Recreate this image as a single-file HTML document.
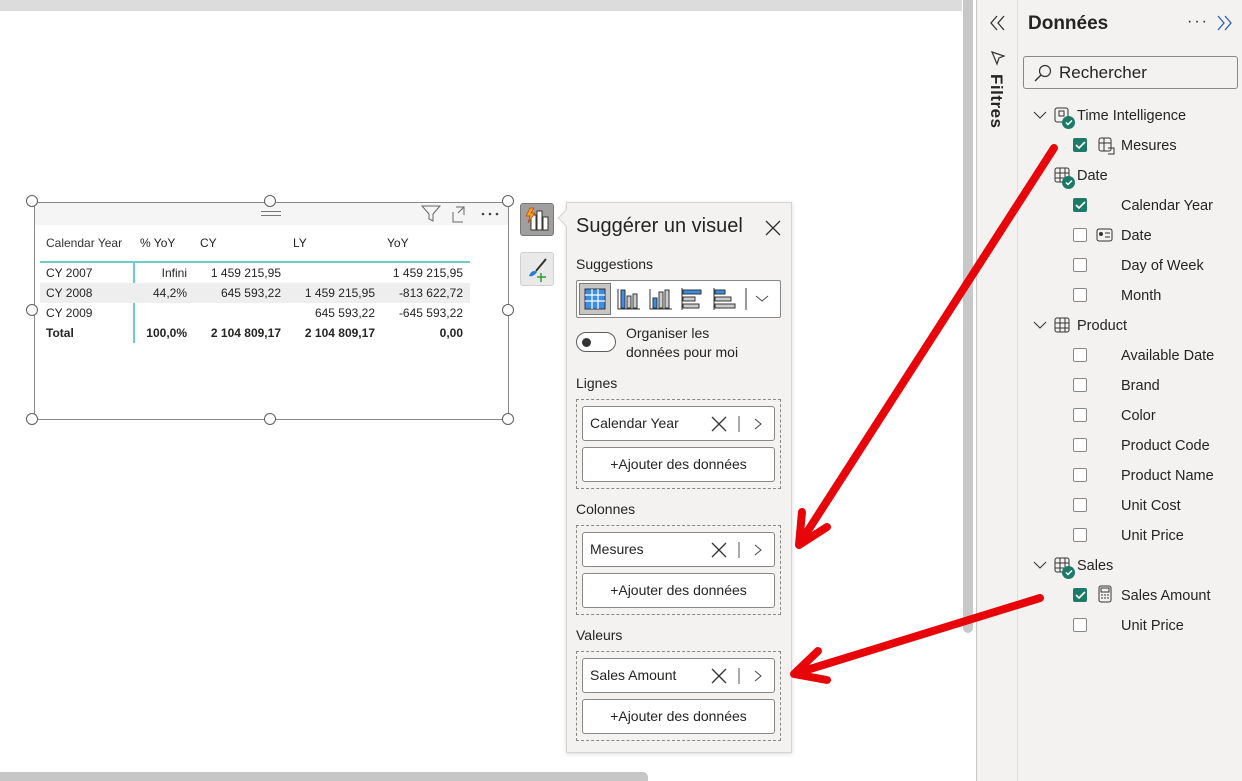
<!DOCTYPE html>
<html><head><meta charset="utf-8"><style>
*{margin:0;padding:0;box-sizing:border-box}
body{width:1242px;height:781px;position:relative;overflow:hidden;background:#fff;font-family:"Segoe UI","Liberation Sans",sans-serif;color:#252423}
.a{position:absolute}
.t{font-size:12px;color:#252423;white-space:nowrap}
.r{text-align:right}
.h{width:12px;height:12px;border:1px solid #605e5c;border-radius:50%;background:#fff;position:absolute}
.lbl{font-size:14px;position:absolute;left:576px}
.well{position:absolute;left:576px;width:205px;height:90px;border:1px dashed #8a8886}
.pill{position:absolute;left:5px;width:193px;height:35px;border:1px solid #8a8886;border-radius:3px;background:#fff;font-size:14px}
.cb{position:absolute;width:14px;height:14px;border:1px solid #8a8886;border-radius:2px;background:#fff}
.cb.on{background:#1e7a68;border-color:#1e7a68}
.rt{position:absolute;font-size:14.5px;color:#252423;white-space:nowrap}
</style></head><body>
<div class="a" style="left:0;top:0;width:962px;height:11px;background:#dcdcdc"></div>
<div class="a" style="left:963px;top:0;width:10px;height:633px;background:#c8c8c8;border-radius:0 0 5px 5px"></div>
<div class="a" style="left:976px;top:0;width:1px;height:781px;background:#c8c6c4"></div>
<div class="a" style="left:0;top:772px;width:648px;height:9px;background:#c6c6c6;border-radius:0 5px 0 0"></div>

<div class="a" style="left:34px;top:202px;width:475px;height:218px;border:1px solid #8a8886"></div>
<div class="a" style="left:35px;top:203px;width:473px;height:22px;background:#f5f5f5"></div>
<div class="a" style="left:261px;top:211px;width:20px;height:1px;background:#777"></div>
<div class="a" style="left:261px;top:215px;width:20px;height:1px;background:#777"></div>
<svg class="a" style="left:420px;top:204px" width="85" height="20"><path d="M2 2h18l-7 8v7l-4-2v-5z" fill="none" stroke="#666"/><path d="M33 8v10h10M36 3h8v8M44 3l-6 6" fill="none" stroke="#666"/><circle cx="63" cy="10" r="1.3" fill="#444"/><circle cx="70" cy="10" r="1.3" fill="#444"/><circle cx="77" cy="10" r="1.3" fill="#444"/></svg>
<div class="h" style="left:26px;top:195px"></div><div class="h" style="left:264px;top:195px"></div><div class="h" style="left:502px;top:195px"></div>
<div class="h" style="left:26px;top:304px"></div><div class="h" style="left:502px;top:304px"></div>
<div class="h" style="left:26px;top:413px"></div><div class="h" style="left:264px;top:413px"></div><div class="h" style="left:502px;top:413px"></div>
<div class="t a" style="left:46px;top:236px;color:#333">Calendar Year</div>
<div class="t a" style="left:140px;top:236px">% YoY</div>
<div class="t a" style="left:200px;top:236px">CY</div>
<div class="t a" style="left:293px;top:236px">LY</div>
<div class="t a" style="left:387px;top:236px">YoY</div>
<div class="a" style="left:40px;top:261px;width:430px;height:2px;background:#6bcfc5"></div>
<div class="a" style="left:133px;top:262px;width:2px;height:81px;background:#6bcfc5"></div>
<div class="a" style="left:40px;top:283px;width:430px;height:20px;background:#eeeeee"></div>
<div class="t a" style="left:46px;top:266px">CY 2007</div><div class="t a r" style="left:140px;width:47px;top:266px">Infini</div><div class="t a r" style="left:190px;width:91px;top:266px">1 459 215,95</div><div class="t a r" style="left:370px;width:93px;top:266px">1 459 215,95</div>
<div class="t a" style="left:46px;top:286px">CY 2008</div><div class="t a r" style="left:140px;width:47px;top:286px">44,2%</div><div class="t a r" style="left:190px;width:91px;top:286px">645 593,22</div><div class="t a r" style="left:280px;width:95px;top:286px">1 459 215,95</div><div class="t a r" style="left:370px;width:93px;top:286px">-813 622,72</div>
<div class="t a" style="left:46px;top:306px">CY 2009</div><div class="t a r" style="left:280px;width:95px;top:306px">645 593,22</div><div class="t a r" style="left:370px;width:93px;top:306px">-645 593,22</div>
<div class="t a" style="left:46px;top:326px;font-weight:bold">Total</div><div class="t a r" style="left:130px;width:57px;top:326px;font-weight:bold">100,0%</div><div class="t a r" style="left:190px;width:91px;top:326px;font-weight:bold">2 104 809,17</div><div class="t a r" style="left:280px;width:95px;top:326px;font-weight:bold">2 104 809,17</div><div class="t a r" style="left:370px;width:93px;top:326px;font-weight:bold">0,00</div>

<div class="a" style="left:520px;top:203px;width:34px;height:33px;background:#a19f9d;border:1px solid #777;border-radius:3px"></div>
<svg class="a" style="left:522px;top:205px" width="30" height="30"><rect x="9" y="10" width="5" height="15" fill="#fff" stroke="#333"/><rect x="15" y="6" width="5" height="19" fill="#fff" stroke="#333"/><rect x="21" y="12" width="5" height="13" fill="#fff" stroke="#333"/><path d="M8 3l-4 8h4l-2 7 7-10h-4l3-5z" fill="#f7a21b" stroke="#c2410c" stroke-width=".7"/></svg>
<div class="a" style="left:520px;top:252px;width:34px;height:34px;background:#e9e9e9;border:1px solid #d0d0d0;border-radius:3px"></div>
<svg class="a" style="left:524px;top:256px" width="28" height="28"><path d="M22 3l-10 12" stroke="#333" stroke-width="2"/><path d="M5 20c2-5 5-6 8-4-2 3-5 5-8 4z" fill="#2b7bd6"/><path d="M17 17v9M13 21h9" stroke="#2ca02c" stroke-width="1.5"/></svg>

<div class="a" style="left:566px;top:202px;width:226px;height:551px;background:#f3f2f1;border:1px solid #d6d4d2;box-shadow:0 1px 4px rgba(0,0,0,.15)"></div>
<div class="a" style="left:560px;top:212px;width:12px;height:12px;background:#f3f2f1;border-left:1px solid #d6d4d2;border-bottom:1px solid #d6d4d2;transform:rotate(45deg)"></div>
<div class="a" style="left:576px;top:215px;font-size:20px">Suggérer un visuel</div>
<svg class="a" style="left:765px;top:220px" width="16" height="16"><path d="M1 1l14 14M15 1L1 15" stroke="#333" stroke-width="1.3"/></svg>
<div class="lbl" style="top:256px">Suggestions</div>
<div class="a" style="left:576px;top:280px;width:205px;height:38px;background:#fff;border:1px solid #8a8886;border-radius:2px"></div>
<div class="a" style="left:579px;top:283px;width:32px;height:32px;background:#c8c6c4;border:1px solid #777"></div>
<svg class="a" style="left:582px;top:286px" width="200" height="26">
<rect x="3" y="3" width="20" height="20" fill="#3a8ee6" stroke="#333"/><path d="M3 9h20M3 15h20M10 3v20M16 3v20" stroke="#fff" stroke-width="1.2"/>
<g transform="translate(34,0)" fill="none" stroke="#333"><path d="M2 3v20h22"/><rect x="5" y="4" width="4" height="18" fill="#3a8ee6"/><rect x="11" y="10" width="4" height="12" fill="#ccc"/><rect x="17" y="8" width="4" height="14" fill="#ccc"/></g>
<g transform="translate(66,0)" fill="none" stroke="#333"><path d="M2 3v20h22"/><rect x="5" y="12" width="4" height="10" fill="#3a8ee6"/><rect x="11" y="6" width="4" height="16" fill="#ccc"/><rect x="17" y="4" width="4" height="18" fill="#ccc"/></g>
<g transform="translate(98,0)" fill="none" stroke="#333"><path d="M2 2v22"/><rect x="3" y="4" width="18" height="4" fill="#3a8ee6"/><rect x="3" y="11" width="12" height="4" fill="#ccc"/><rect x="3" y="18" width="16" height="4" fill="#ccc"/></g>
<g transform="translate(130,0)" fill="none" stroke="#333"><path d="M2 2v22"/><rect x="3" y="4" width="10" height="4" fill="#3a8ee6"/><rect x="3" y="11" width="16" height="4" fill="#ccc"/><rect x="3" y="18" width="20" height="4" fill="#ccc"/></g>
<path d="M164 2v22" stroke="#333"/><path d="M174 10l6 5 6-5" fill="none" stroke="#444"/>
</svg>
<div class="a" style="left:576px;top:332px;width:40px;height:20px;border:1px solid #605e5c;border-radius:10px;background:#fff"></div>
<div class="a" style="left:582px;top:338px;width:9px;height:9px;border-radius:50%;background:#333"></div>
<div class="a" style="left:626px;top:324px;font-size:14px;line-height:19px">Organiser les<br>données pour moi</div>

<div class="lbl" style="top:375px">Lignes</div>
<div class="well" style="top:399px"><div class="pill" style="top:6px"><span class="a" style="left:7px;top:8px">Calendar Year</span><svg class="a" style="left:128px;top:9px" width="60" height="16"><path d="M1 1l14 14M15 1L1 15" stroke="#333" stroke-width="1.3"/><path d="M28 0v16" stroke="#555"/><path d="M44 3l6 5-6 5" fill="none" stroke="#444"/></svg></div>
<div class="pill" style="top:47px;text-align:center;line-height:33px">+Ajouter des données</div></div>
<div class="lbl" style="top:501px">Colonnes</div>
<div class="well" style="top:525px"><div class="pill" style="top:6px"><span class="a" style="left:7px;top:8px">Mesures</span><svg class="a" style="left:128px;top:9px" width="60" height="16"><path d="M1 1l14 14M15 1L1 15" stroke="#333" stroke-width="1.3"/><path d="M28 0v16" stroke="#555"/><path d="M44 3l6 5-6 5" fill="none" stroke="#444"/></svg></div>
<div class="pill" style="top:47px;text-align:center;line-height:33px">+Ajouter des données</div></div>
<div class="lbl" style="top:627px">Valeurs</div>
<div class="well" style="top:651px"><div class="pill" style="top:6px"><span class="a" style="left:7px;top:8px">Sales Amount</span><svg class="a" style="left:128px;top:9px" width="60" height="16"><path d="M1 1l14 14M15 1L1 15" stroke="#333" stroke-width="1.3"/><path d="M28 0v16" stroke="#555"/><path d="M44 3l6 5-6 5" fill="none" stroke="#444"/></svg></div>
<div class="pill" style="top:47px;text-align:center;line-height:33px">+Ajouter des données</div></div>

<div class="a" style="left:977px;top:0;width:41px;height:781px;background:#f3f2f1;border-right:1px solid #e1dfdd"></div>
<svg class="a" style="left:988px;top:14px" width="20" height="18"><path d="M9 2L3 9l6 7M16 2l-6 7 6 7" fill="none" stroke="#333" stroke-width="1.3"/></svg>
<svg class="a" style="left:990px;top:50px" width="16" height="16"><path d="M2 2l12 4-5 2-2 6z" fill="none" stroke="#333" stroke-width="1.2"/></svg>
<div class="a" style="left:986px;top:74px;font-size:17px;font-weight:600;writing-mode:vertical-rl;letter-spacing:.5px;color:#252423">Filtres</div>

<div class="a" style="left:1018px;top:0;width:224px;height:781px;background:#f3f2f1"></div>
<div class="a" style="left:1028px;top:13px;font-size:19px;font-weight:600">Données</div>
<div class="a" style="left:1187px;top:13px;font-size:16px;letter-spacing:2px">···</div>
<svg class="a" style="left:1215px;top:14px" width="20" height="18"><path d="M3 2l6 7-6 7M10 2l6 7-6 7" fill="none" stroke="#2b5fb4" stroke-width="1.3"/></svg>
<div class="a" style="left:1023px;top:56px;width:215px;height:33px;border:1px solid #8a8886;border-radius:3px;background:#f3f2f1"></div>
<svg class="a" style="left:1033px;top:64px" width="20" height="18"><circle cx="12" cy="7" r="5.5" fill="none" stroke="#333" stroke-width="1.2"/><path d="M8 11l-6 6" stroke="#333" stroke-width="1.4"/></svg>
<div class="rt" style="left:1059px;top:63px;font-size:17px">Rechercher</div>

<svg class="a" style="left:1030px;top:100px" width="100" height="540" fill="none" stroke="#333" stroke-width="1">
<path d="M4 12l6 6 6-6M4 222l6 6 6-6M4 462l6 6 6-6"/>
<rect x="25" y="8" width="13" height="14" rx="2"/><rect x="29" y="11" width="5" height="5"/>
<rect x="25" y="68" width="14" height="14" rx="2"/><path d="M25 73h14M25 78h14M30 68v14M35 68v14"/>
<rect x="25" y="218" width="14" height="14" rx="2"/><path d="M25 223h14M25 228h14M30 218v14M35 218v14"/>
<rect x="25" y="458" width="14" height="14" rx="2"/><path d="M25 463h14M25 468h14M30 458v14M35 458v14"/>
<rect x="69" y="38" width="12" height="13" rx="2"/><path d="M69 43h12M74 38v13"/><path d="M78 48h6v6h-6" />
<rect x="67" y="129" width="15" height="12" rx="2"/><path d="M75 133h5M75 137h5"/><circle cx="71" cy="134" r="1.5" fill="#333"/>
<rect x="69" y="486" width="12" height="16" rx="2"/><rect x="71" y="488" width="8" height="4"/><path d="M71 495h2M74 495h2M77 495h2M71 498h2M74 498h2M77 498h2"/>
</svg>
<div class="a" style="left:1062px;top:116px;width:13px;height:13px;border-radius:50%;background:#1e7a68"></div>
<div class="a" style="left:1062px;top:176px;width:13px;height:13px;border-radius:50%;background:#1e7a68"></div>
<div class="a" style="left:1062px;top:566px;width:13px;height:13px;border-radius:50%;background:#1e7a68"></div>
<svg class="a" style="left:1062px;top:116px" width="14" height="470" fill="none" stroke="#fff" stroke-width="1.4"><path d="M4 6.5l2 2 4-4M4 66.5l2 2 4-4M4 456.5l2 2 4-4"/></svg>

<div class="rt" style="left:1077px;top:108px">Time Intelligence</div>
<div class="cb on" style="left:1073px;top:138px"></div><div class="rt" style="left:1121px;top:138px">Mesures</div>
<div class="rt" style="left:1077px;top:168px">Date</div>
<div class="cb on" style="left:1073px;top:198px"></div><div class="rt" style="left:1121px;top:198px">Calendar Year</div>
<div class="cb" style="left:1073px;top:228px"></div><div class="rt" style="left:1121px;top:228px">Date</div>
<div class="cb" style="left:1073px;top:258px"></div><div class="rt" style="left:1121px;top:258px">Day of Week</div>
<div class="cb" style="left:1073px;top:288px"></div><div class="rt" style="left:1121px;top:288px">Month</div>
<div class="rt" style="left:1077px;top:318px">Product</div>
<div class="cb" style="left:1073px;top:348px"></div><div class="rt" style="left:1121px;top:348px">Available Date</div>
<div class="cb" style="left:1073px;top:378px"></div><div class="rt" style="left:1121px;top:378px">Brand</div>
<div class="cb" style="left:1073px;top:408px"></div><div class="rt" style="left:1121px;top:408px">Color</div>
<div class="cb" style="left:1073px;top:438px"></div><div class="rt" style="left:1121px;top:438px">Product Code</div>
<div class="cb" style="left:1073px;top:468px"></div><div class="rt" style="left:1121px;top:468px">Product Name</div>
<div class="cb" style="left:1073px;top:498px"></div><div class="rt" style="left:1121px;top:498px">Unit Cost</div>
<div class="cb" style="left:1073px;top:528px"></div><div class="rt" style="left:1121px;top:528px">Unit Price</div>
<div class="rt" style="left:1077px;top:558px">Sales</div>
<div class="cb on" style="left:1073px;top:588px"></div><div class="rt" style="left:1121px;top:588px">Sales Amount</div>
<div class="cb" style="left:1073px;top:618px"></div><div class="rt" style="left:1121px;top:618px">Unit Price</div>
<svg class="a" style="left:1073px;top:130px" width="20" height="500" fill="none" stroke="#fff" stroke-width="1.6"><path d="M3 15l3 3 6-6M3 75l3 3 6-6M3 465l3 3 6-6"/></svg>

<svg class="a" style="left:0;top:0" width="1242" height="781" fill="none" stroke="#e8050a" stroke-width="8" stroke-linecap="round" stroke-linejoin="round">
<path d="M1054 148L800 543M802 512L799 545L827 527"/>
<path d="M1040 598L797 673M818 651L794 674L827 680"/>
</svg>
</body></html>
